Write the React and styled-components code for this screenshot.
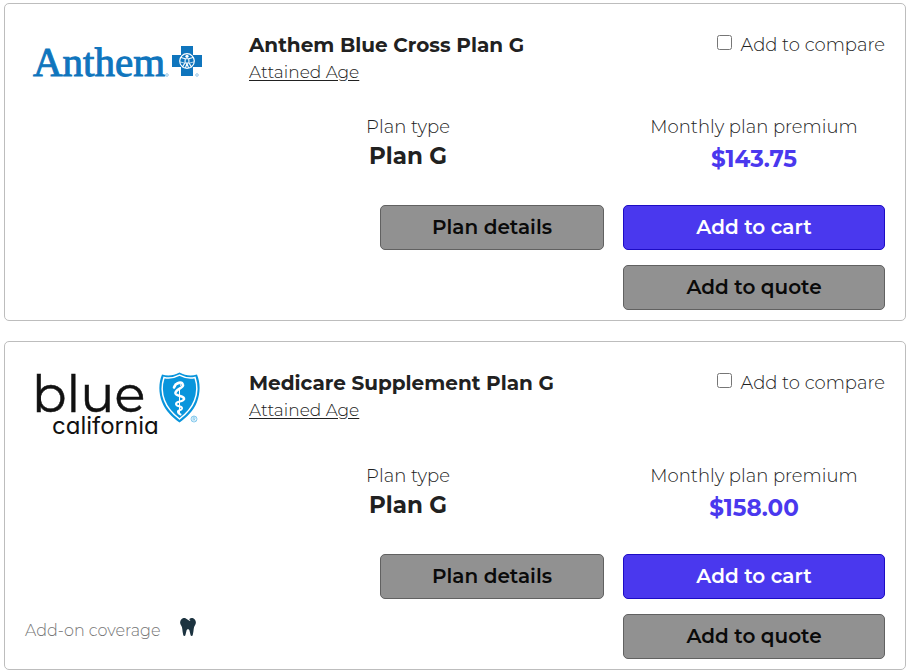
import React from 'react';
import styled, { createGlobalStyle } from 'styled-components';
import { FaTooth } from 'react-icons/fa';

const plans = [
  {
    id: 'anthem',
    logo: 'anthem',
    title: 'Anthem Blue Cross Plan G',
    type: 'Plan G',
    premium: '$143.75',
    dental: false,
  },
  {
    id: 'blueshield',
    logo: 'blue',
    title: 'Medicare Supplement Plan G',
    type: 'Plan G',
    premium: '$158.00',
    dental: true,
  },
];

const AnthemLogo = () => (
  <svg width="180" height="70" viewBox="0 -4 180 70" role="img" aria-label="Anthem">
    <AnthemWord x="8" y="48">Anthem</AnthemWord>
    <g fill="none" stroke="#6faedb" strokeWidth="0.7">
      <circle cx="142" cy="47" r="1.3" />
      <circle cx="172" cy="47" r="1.3" />
    </g>
    <path d="M156 18h12v9h9v12h-9v9h-12v-9h-9V27h9z" fill="#0f75bd" />
    <g fill="none" stroke="#fff" strokeLinecap="round">
      <circle cx="162" cy="33" r="7.3" strokeWidth="1.2" />
      <path d="M156 29.5l4.2 1.2h3.6l4.2-1.2M160.2 31l-.2 4-2.6 4M163.8 31l.2 4 2.6 4M160 35h4M162 35.500l-1.400 4M162 35.500l1.400 4" strokeWidth="1.1" />
      <path d="M155.500 34l3.500 1M168.500 34l-3.500 1" strokeWidth="0.7" />
    </g>
    <circle cx="162" cy="28.300" r="1.600" fill="#fff" />
  </svg>
);

const BlueLogo = () => (
  <svg width="180" height="81" viewBox="0 -4 180 81" role="img" aria-label="blue california">
    <BlueWord x="7" y="46">blue</BlueWord>
    <CaliforniaWord x="27" y="68">california</CaliforniaWord>
    <path d="M137 8.500C143 10.500 149 9.500 154.500 6.500C160 9.500 166 10.500 172 8.500C175.500 17 175.500 27 172 36C168.500 45 162 51 154.500 56.500C147 51 140.500 45 137 36C133.500 27 133.500 17 137 8.500Z" fill="#0995dc" />
    <path d="M139 11.500C144.500 12.800 149.500 11.800 154.500 9.200C159.500 11.800 164.500 12.800 170 11.500C172.500 19 172.500 27 169.500 34.500C166.500 42.500 161 48 154.500 53C148 48 142.500 42.500 139.500 34.500C136.500 27 136.500 19 139 11.500Z" fill="none" stroke="#fff" strokeWidth="1.500" />
    <g fill="none" stroke="#fff" strokeLinecap="round" strokeLinejoin="round">
      <path d="M149 21.500C151 16 157 15 158 19C159 22 149.500 23.500 150.500 27.500C151.500 31 159.500 29 159 33" strokeWidth="2.600" />
      <path d="M159 33C158.500 36.500 151 34.500 151 38C151 41 157.500 39.500 157 42.500C156.500 45 152.500 43.500 153 46C153.200 47.500 154.500 48 155.500 48.500" strokeWidth="2" />
      <path d="M154.500 17L156 20M154.500 24V48M153 18l-3 0" strokeWidth="1" />
    </g>
    <g fill="none" stroke="#68bde8">
      <circle cx="169" cy="53" r="3" strokeWidth="0.8" />
      <path d="M168 55v-4h1.300a1 1 0 0 1 0 2H168M169.300 53l1 2" strokeWidth="0.700" />
    </g>
  </svg>
);

const PlanCard = ({ plan }) => (
  <Card>
    <Header>
      <LogoBox>{plan.logo === 'anthem' ? <AnthemLogo /> : <BlueLogo />}</LogoBox>
      <Heading>
        <PlanTitle>{plan.title}</PlanTitle>
        <RatingLink href="#rating">Attained Age</RatingLink>
      </Heading>
      <Compare>
        <CompareBox type="checkbox" id={`compare-${plan.id}`} />
        <CompareLabel htmlFor={`compare-${plan.id}`}>Add to compare</CompareLabel>
      </Compare>
    </Header>

    <Facts>
      <Fact>
        <FactLabel>Plan type</FactLabel>
        <FactValue>{plan.type}</FactValue>
      </Fact>
      <Fact>
        <FactLabel>Monthly plan premium</FactLabel>
        <FactValue $price>{plan.premium}</FactValue>
      </Fact>
    </Facts>

    <Actions>
      <AddOn>
        {plan.dental && (
          <>
            <span>Add-on coverage</span>
            <FaTooth size={18} color="#1c3340" aria-label="Dental" />
          </>
        )}
      </AddOn>
      <DetailsSlot>
        <Button type="button">Plan details</Button>
      </DetailsSlot>
      <ButtonStack>
        <Button type="button" $primary>Add to cart</Button>
        <Button type="button">Add to quote</Button>
      </ButtonStack>
    </Actions>
  </Card>
);

const App = () => (
  <>
    <GlobalStyle />
    <PlanList>
      {plans.map((plan) => (
        <PlanCard key={plan.id} plan={plan} />
      ))}
    </PlanList>
  </>
);

const GlobalStyle = createGlobalStyle`
  * {
    box-sizing: border-box;
  }
  body {
    margin: 0;
    background: #fff;
    color: #212121;
    font-family: Montserrat, Inter, "Liberation Sans", sans-serif;
    font-size: 17px;
  }
`;

const PlanList = styled.main`
  display: flex;
  flex-direction: column;
  gap: 20px;
  padding: 3px 6px 2px 4px;
`;

const Card = styled.article`
  padding: 20px 20px 10px;
  border: 1px solid #bdbdbd;
  border-radius: 5px;
`;

const Header = styled.header`
  display: flex;
  align-items: flex-start;
`;

const LogoBox = styled.div`
  flex: 0 0 224px;

  svg {
    display: block;
  }
`;

const Heading = styled.div`
  flex: 1;
  padding-top: 7px;
`;

const PlanTitle = styled.h2`
  margin: 0;
  font-size: 20px;
  line-height: 28px;
  font-weight: 700;
`;

const RatingLink = styled.a`
  color: inherit;
  font-size: 17px;
  line-height: 26px;
  font-weight: 300;
  text-decoration: underline;
  text-underline-offset: 2px;
`;

const Compare = styled.div`
  display: flex;
  align-items: flex-start;
  gap: 9px;
  padding-top: 7px;
`;

const CompareBox = styled.input`
  width: 15px;
  height: 15px;
  margin: 4px 0 0;
`;

const CompareLabel = styled.label`
  font-size: 18px;
  line-height: 28px;
  font-weight: 300;
`;

const Facts = styled.div`
  display: grid;
  grid-template-columns: 1fr 262px;
  column-gap: 56px;
  padding: 21px 0 26px 224px;
`;

const Fact = styled.div`
  text-align: center;
`;

const FactLabel = styled.div`
  font-size: 18px;
  line-height: 24px;
  font-weight: 300;
`;

const FactValue = styled.div`
  color: ${(props) => (props.$price ? '#4a38ee' : 'inherit')};
  font-size: 23px;
  line-height: ${(props) => (props.$price ? '40px' : '34px')};
  font-weight: 700;
`;

const Actions = styled.div`
  display: grid;
  grid-template-columns: 1fr 224px 262px;
  column-gap: 19px;
`;

const AddOn = styled.div`
  display: flex;
  align-items: flex-start;
  align-self: end;
  gap: 18px;
  padding-bottom: 15px;
  color: #757575;
  font-size: 16px;
  line-height: 26px;
  font-weight: 300;
`;

const DetailsSlot = styled.div`
  display: flex;
  align-items: flex-start;
`;

const ButtonStack = styled.div`
  display: flex;
  flex-direction: column;
  gap: 15px;
`;

const Button = styled.button`
  width: 100%;
  height: 45px;
  padding: 0 16px 2px;
  border: 1px solid ${(props) => (props.$primary ? '#1d0cc4' : '#616161')};
  border-radius: 5px;
  background: ${(props) => (props.$primary ? '#4a38ee' : '#919191')};
  color: ${(props) => (props.$primary ? '#fff' : '#0a0a0a')};
  font-family: inherit;
  font-size: 20px;
  font-weight: 600;
  cursor: pointer;
`;

const AnthemWord = styled.text`
  fill: #0f75bd;
  stroke: #0f75bd;
  stroke-width: 1px;
  font-family: "Liberation Serif", serif;
  font-size: 41px;
  text-rendering: geometricPrecision;
`;

const BlueWord = styled.text`
  fill: #111;
  stroke: #111;
  stroke-width: 0.5px;
  font-family: Montserrat, Inter, sans-serif;
  font-size: 51px;
  font-weight: 400;
`;

const CaliforniaWord = styled.text`
  fill: #111;
  font-family: Inter, sans-serif;
  font-size: 24px;
  font-weight: 400;
  font-feature-settings: "cv11";
`;

export default App;
